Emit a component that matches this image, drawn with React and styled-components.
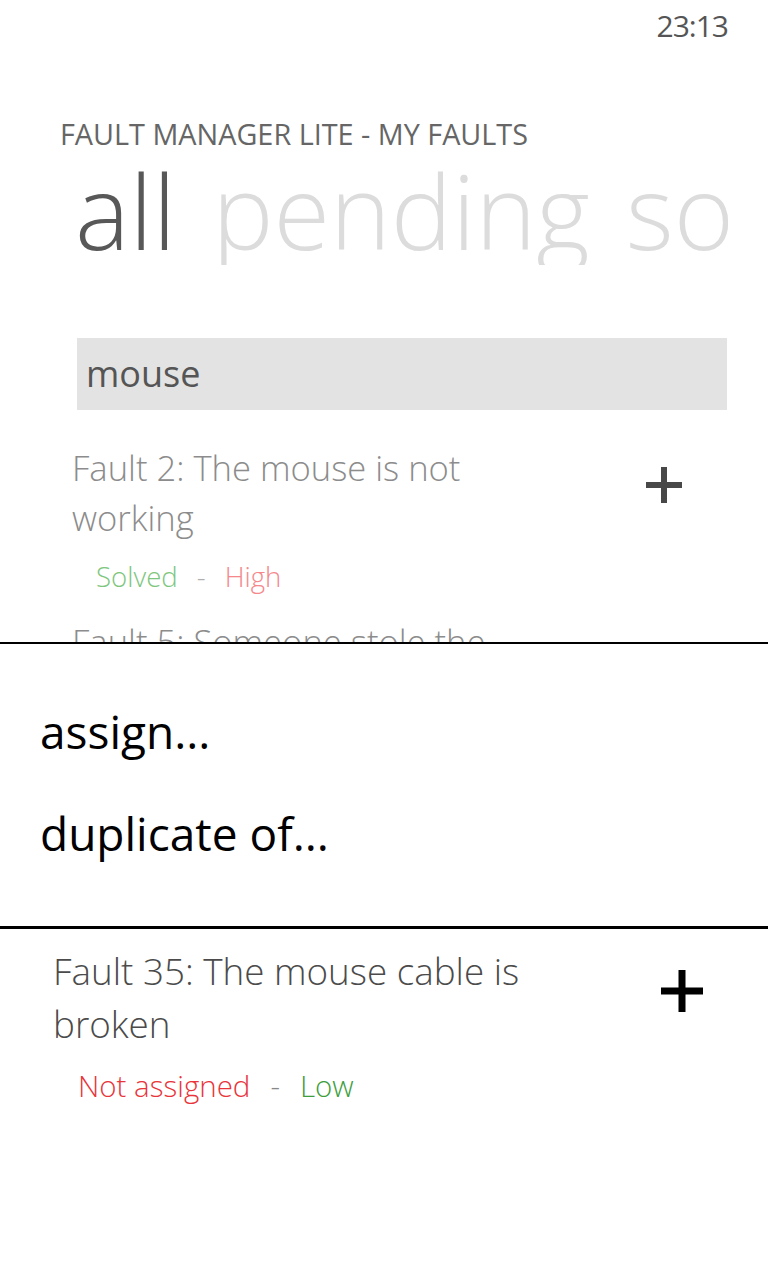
import React from 'react';
import styled, { createGlobalStyle } from "styled-components";

const GlobalStyle = createGlobalStyle`
  body {
    margin: 0;
    background: #fff;
    font-family: 'Open Sans', 'Noto Sans', sans-serif;
  }
`;

const Phone = styled.div`
  position: relative;
  width: 768px;
  height: 1280px;
  overflow: hidden;
  background: #fff;
`;

const StatusBar = styled.div`
  display: flex;
  justify-content: flex-end;
  padding: 6px 40px 0 0;
  font-size: 30px;
  line-height: 40px;
  letter-spacing: -1px;
  color: #555;
`;

const AppTitle = styled.div`
  margin: 68px 0 0 60px;
  font-size: 28.8px;
  line-height: 40px;
  color: #666;
`;

const PivotHeaders = styled.div`
  display: flex;
  gap: 36px;
  width: 653px;
  margin: 1px 0 0 75px;
  overflow: hidden;
  white-space: nowrap;
  font-size: 103px;
  font-weight: 300;
  line-height: 110px;
`;

const PivotTab = styled.span`
  color: ${p => (p.$active ? '#585858' : '#dcdcdc')};
`;

const SearchBox = styled.div`
  height: 72px;
  margin: 73px 41px 0 77px;
  padding-left: 9px;
  background: #e3e3e3;
  font-size: 36px;
  line-height: 72px;
  color: #555;
`;

const FaultList = styled.div`
  display: flex;
  flex-direction: column;
  gap: 22px;
  margin-top: 33px;
`;

const FaultRow = styled.div`
  display: flex;
  align-items: flex-start;
  padding-left: ${p => p.$left}px;
`;

const FaultBody = styled.div`
  width: ${p => p.$width}px;
`;

const FaultTitle = styled.div`
  font-size: ${p => p.$size}px;
  line-height: ${p => p.$line}px;
  font-weight: 300;
  color: ${p => p.$color};
`;

const StatusLine = styled.div`
  display: flex;
  margin: ${p => p.$top}px 0 0 ${p => p.$indent}px;
  font-size: ${p => p.$size}px;
  line-height: 38px;
  font-weight: 300;
`;

const Tag = styled.span`
  color: ${p => p.$color};
`;

const Dash = styled.span`
  margin: 0 ${p => p.$space}px;
  color: ${p => p.$color};
`;

const PlusButton = styled.svg`
  flex: none;
  margin: ${p => p.$top}px 0 0 ${p => p.$left}px;
`;

const Overlay = styled.div`
  position: absolute;
  top: 642px;
  left: 0;
  right: 0;
  bottom: 0;
  background: #fff;
`;

const ContextMenu = styled.div`
  border-top: 2px solid #000;
  border-bottom: 3px solid #000;
  padding: 35.5px 0 42.5px 40px;
`;

const MenuItem = styled.div`
  font-size: 46px;
  line-height: 102px;
  color: #000;
`;

const HeldItem = styled.div`
  padding-top: 15.5px;
`;

function Plus({ size, stroke, color, top, left }) {
  const mid = (size - stroke) / 2;
  return (
    <PlusButton $top={top} $left={left} width={size} height={size} viewBox={`0 0 ${size} ${size}`}>
      <rect x={0} y={mid} width={size} height={stroke} fill={color} />
      <rect x={mid} y={0} width={stroke} height={size} fill={color} />
    </PlusButton>
  );
}

function App() {
  return (
    <Phone>
      <GlobalStyle />
      <StatusBar>23:13</StatusBar>
      <AppTitle>FAULT MANAGER LITE - MY FAULTS</AppTitle>
      <PivotHeaders>
        <PivotTab $active>all</PivotTab>
        <PivotTab>pending</PivotTab>
        <PivotTab>solved</PivotTab>
      </PivotHeaders>
      <SearchBox>mouse</SearchBox>

      <FaultList>
        <FaultRow $left={72}>
          <FaultBody $width={480}>
            <FaultTitle $size={34.6} $line={50} $color="#8c8c8c">
              Fault 2: The mouse is not working
            </FaultTitle>
            <StatusLine $top={14} $indent={24} $size={27.6}>
              <Tag $color="#7dc67d">Solved</Tag>
              <Dash $space={19} $color="#b0b0b0">-</Dash>
              <Tag $color="#f4888c">High</Tag>
            </StatusLine>
          </FaultBody>
          <Plus size={36} stroke={6} color="#484848" top={24} left={94} />
        </FaultRow>
        <FaultRow $left={72}>
          <FaultBody $width={480}>
            <FaultTitle $size={34.6} $line={50} $color="#8c8c8c">
              Fault 5: Someone stole the keyboard
            </FaultTitle>
          </FaultBody>
        </FaultRow>
      </FaultList>

      <Overlay>
        <ContextMenu>
          <MenuItem>assign...</MenuItem>
          <MenuItem>duplicate of...</MenuItem>
        </ContextMenu>
        <HeldItem>
          <FaultRow $left={53}>
            <FaultBody $width={560}>
              <FaultTitle $size={36.8} $line={53} $color="#4b4b4b">
                Fault 35: The mouse cable is broken
              </FaultTitle>
              <StatusLine $top={16} $indent={25} $size={29.5}>
                <Tag $color="#e8343a">Not assigned</Tag>
                <Dash $space={20} $color="#888">-</Dash>
                <Tag $color="#3d9e3d">Low</Tag>
              </StatusLine>
            </FaultBody>
            <Plus size={42} stroke={7} color="#000" top={25} left={48} />
          </FaultRow>
        </HeldItem>
      </Overlay>
    </Phone>
  );
}

export default App;
